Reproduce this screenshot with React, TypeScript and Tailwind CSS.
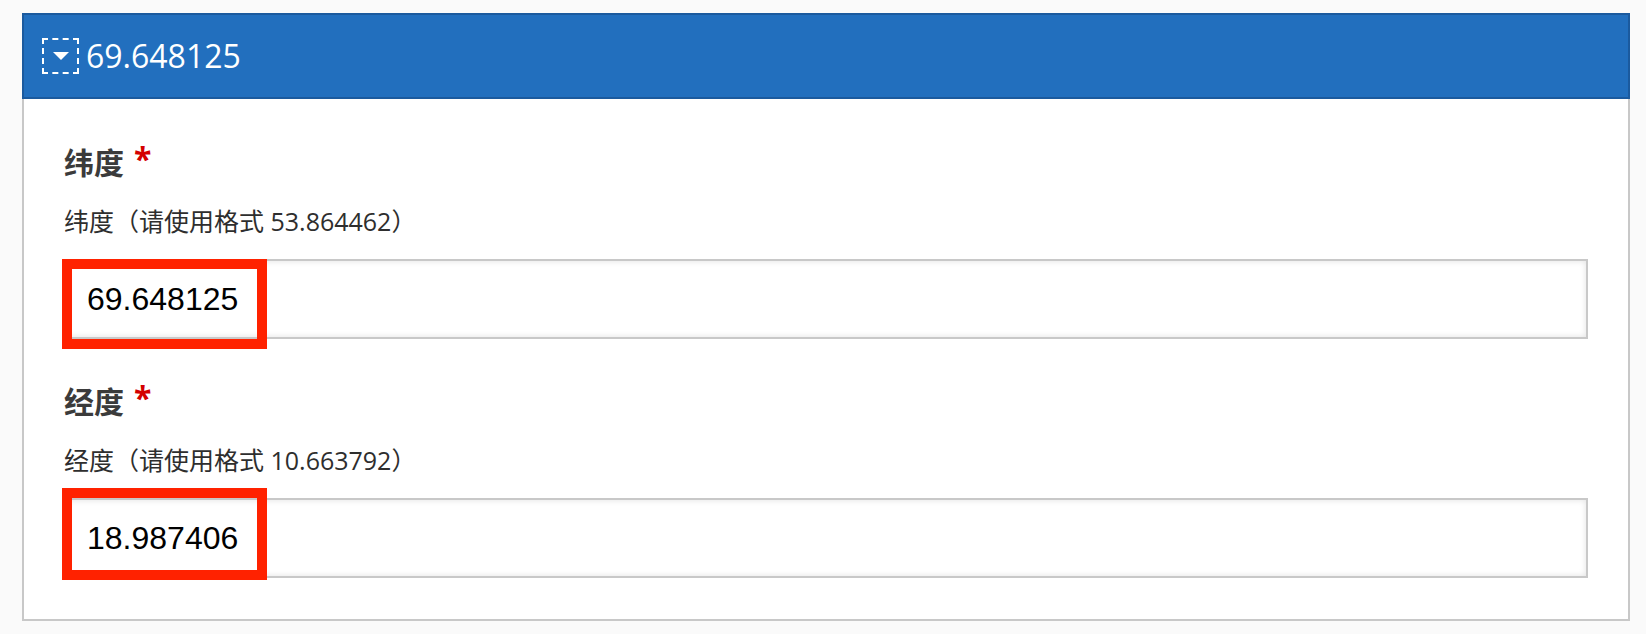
import React from 'react';

const fields = [
  { label: '纬度', hint: '纬度（请使用格式 53.864462）', value: '69.648125', mark: 'top-0 h-[90px]' },
  { label: '经度', hint: '经度（请使用格式 10.663792）', value: '18.987406', mark: '-top-[10px] h-[92px]' },
];

function Field({ label, hint, value, mark, first }: { label: string; hint: string; value: string; mark: string; first?: boolean }) {
  return (
    <div className={first ? '' : 'mt-[45px]'}>
      <div className="flex items-start text-[30px] leading-[36px] font-bold text-[#3b3b3b]">
        <span>{label}</span>
        <span className="ml-[10px] text-[32px] leading-[28px] text-[#d40000]" style={{ fontFamily: '"Open Sans", sans-serif' }}>*</span>
      </div>
      <div className="mt-[25px] text-[25px] leading-[30px] text-[#2e2e2e]">{hint}</div>
      <div className="relative mt-[23px]">
        <input
          readOnly
          value={value}
          className="block w-full h-[80px] border-2 border-[#c8c8c8] bg-white pl-[21px] text-[32px] text-black outline-none shadow-[inset_0_0_6px_rgba(0,0,0,0.12)]"
          style={{ fontFamily: '"Liberation Sans", Arial, sans-serif' }}
        />
        {/* annotation box drawn over the value */}
        <div className={`pointer-events-none absolute -left-[2px] w-[205px] border-[10px] border-[#ff2200] ${mark}`} />
      </div>
    </div>
  );
}

export default function App() {
  return (
    <div
      className="min-h-screen bg-[#fafafa] pt-[13px] pl-[22px] pr-[16px]"
      style={{ fontFamily: '"Open Sans", "Noto Sans CJK SC", sans-serif' }}
    >
      <div className="flex flex-col">
        <div className="h-[86px] border-2 border-[#1b5a9e] bg-[#226fbe] flex items-center pl-[18px] text-white">
          <span className="w-[37px] h-[36px] border-2 border-dashed border-white flex items-center justify-center">
            <svg width="16" height="8" viewBox="0 0 16 8">
              <path d="M0 0H16L8 8Z" fill="#fff" />
            </svg>
          </span>
          <span className="ml-[7px] text-[32px] leading-none">69.648125</span>
        </div>
        <div className="border-x-2 border-b-2 border-[#c8c8c8] bg-white px-[40px] pt-[46px] pb-[41px]">
          {fields.map((f, i) => (
            <Field key={f.label} {...f} first={i === 0} />
          ))}
        </div>
      </div>
    </div>
  );
}
